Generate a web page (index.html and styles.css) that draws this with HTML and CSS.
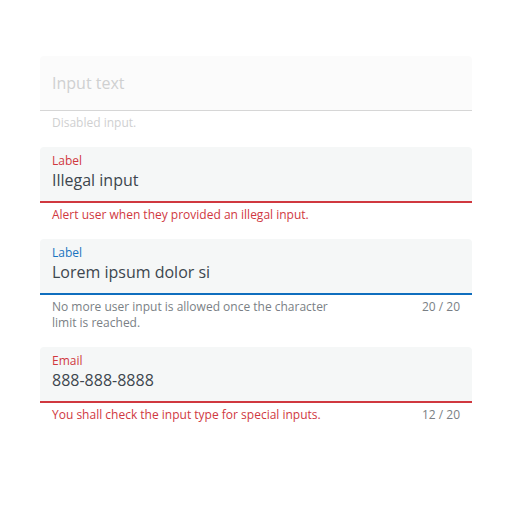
FILE: index.html
```html
<!DOCTYPE html>
<html>
<head>
<meta charset="utf-8">
<link rel="stylesheet" href="styles.css">
</head>
<body>
<div class="stack">
  <div class="field disabled">
    <div class="box">
      <div class="placeholder">Input text</div>
    </div>
    <div class="helper"><span class="msg">Disabled input.</span></div>
  </div>

  <div class="field error">
    <div class="box">
      <div class="label">Label</div>
      <div class="value">Illegal input</div>
    </div>
    <div class="helper"><span class="msg">Alert user when they provided an illegal input.</span></div>
  </div>

  <div class="field focus">
    <div class="box">
      <div class="label">Label</div>
      <div class="value">Lorem ipsum dolor si</div>
    </div>
    <div class="helper"><span class="msg">No more user input is allowed once the character limit is reached.</span><span class="count">20 / 20</span></div>
  </div>

  <div class="field error">
    <div class="box">
      <div class="label">Email</div>
      <div class="value">888-888-8888</div>
    </div>
    <div class="helper"><span class="msg">You shall check the input type for special inputs.</span><span class="count">12 / 20</span></div>
  </div>
</div>
</body>
</html>
```

FILE: styles.css
```css
* { box-sizing: border-box; }
html, body { margin: 0; padding: 0; background: #ffffff; }
body {
  font-family: "Open Sans", "Noto Sans", sans-serif;
  padding: 56px 40px 0 40px;
}
.stack {
  display: flex;
  flex-direction: column;
  gap: 16px;
}
.box {
  background: #f5f7f7;
  border-radius: 4px 4px 0 0;
  border-bottom: 2px solid #d2d4d6;
  height: 56px;
  padding: 6px 12px 0 12px;
}
.label {
  font-size: 12px;
  line-height: 15px;
  color: #5c6670;
}
.value {
  font-size: 16px;
  line-height: 24px;
  color: #3d464e;
}
.helper {
  display: flex;
  justify-content: space-between;
  padding: 4px 12px 0 12px;
  font-size: 12px;
  line-height: 16px;
  color: #7a7f85;
}
.msg { max-width: 290px; }
.count { color: #7a7f85; }

.disabled .box {
  background: #fbfbfb;
  border-bottom: 1px solid #d6d6d6;
  height: 55px;
  display: flex;
  align-items: center;
  padding-top: 0;
}
.disabled .placeholder {
  font-size: 16px;
  line-height: 24px;
  color: #cfd0d1;
}
.disabled .helper { color: #cfd0d1; }

.error .box { border-bottom-color: #d0383f; }
.error .label { color: #d0383f; }
.error .msg { color: #d0383f; }

.focus .box { border-bottom-color: #0f6ebe; }
.focus .label { color: #1a74c0; }
```
